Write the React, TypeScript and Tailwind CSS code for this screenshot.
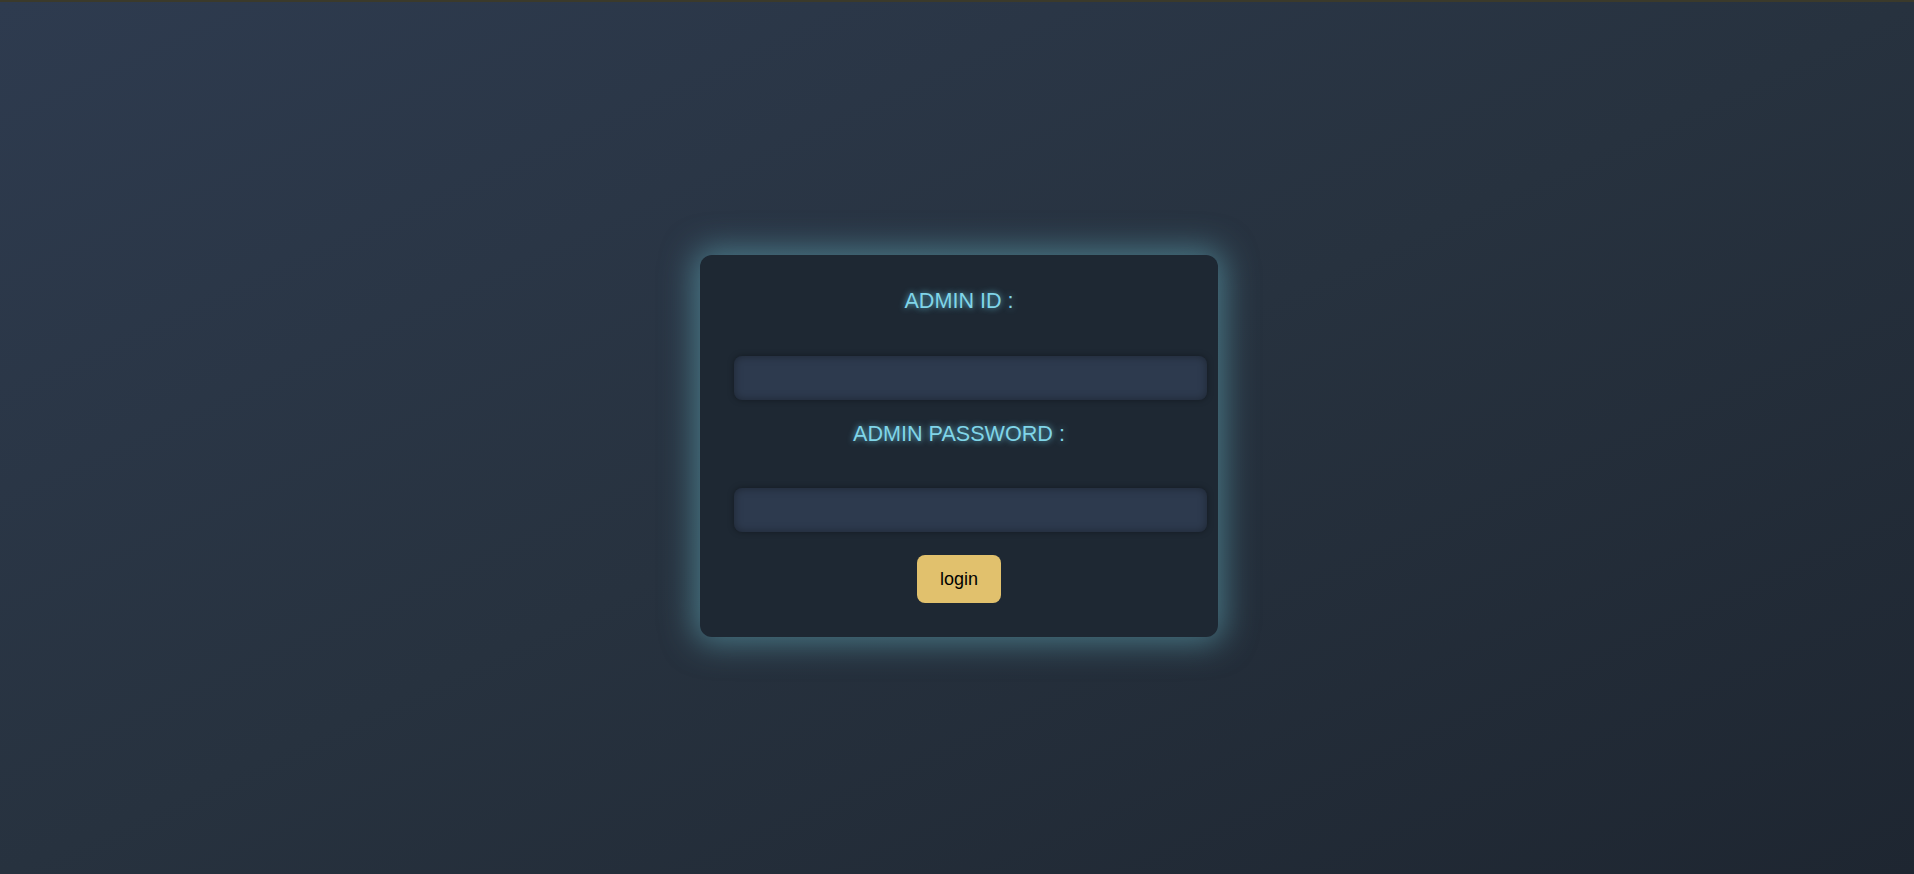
export default function App() {
  const labelClass =
    "text-center text-[21.6px] leading-[25px] text-[#80d5e8] [text-shadow:0_0_6px_rgba(110,210,235,0.85)]";
  const inputClass =
    "ml-[34px] h-[44px] w-[473px] rounded-lg bg-[#2d3a4e] shadow-[inset_0_0_8px_rgba(0,0,0,0.35),0_0_6px_rgba(0,0,0,0.35)] outline-none px-3 text-white";

  return (
    <div
      className="min-h-screen w-full border-t-2 border-[#3b3a2b] bg-gradient-to-br from-[#2e3b4f] via-[#27323f] to-[#1e2631] pt-[253px] pl-1 font-['Liberation_Sans',Arial,sans-serif]"
    >
      <div className="mx-auto flex h-[382px] w-[518px] flex-col rounded-xl bg-[#1e2833] pt-[33px] shadow-[0_0_32px_6px_rgba(95,165,180,0.6)]">
        <label className={labelClass}>ADMIN ID :</label>
        <input type="text" className={`${inputClass} mt-[43px]`} />
        <label className={`${labelClass} mt-[21px]`}>ADMIN PASSWORD :</label>
        <input type="password" className={`${inputClass} mt-[42px]`} />
        <div className="mt-[23px] flex justify-center">
          <button className="h-[48px] w-[84px] rounded-lg bg-[#e1c16d] text-[18px] text-black">
            login
          </button>
        </div>
      </div>
    </div>
  );
}
